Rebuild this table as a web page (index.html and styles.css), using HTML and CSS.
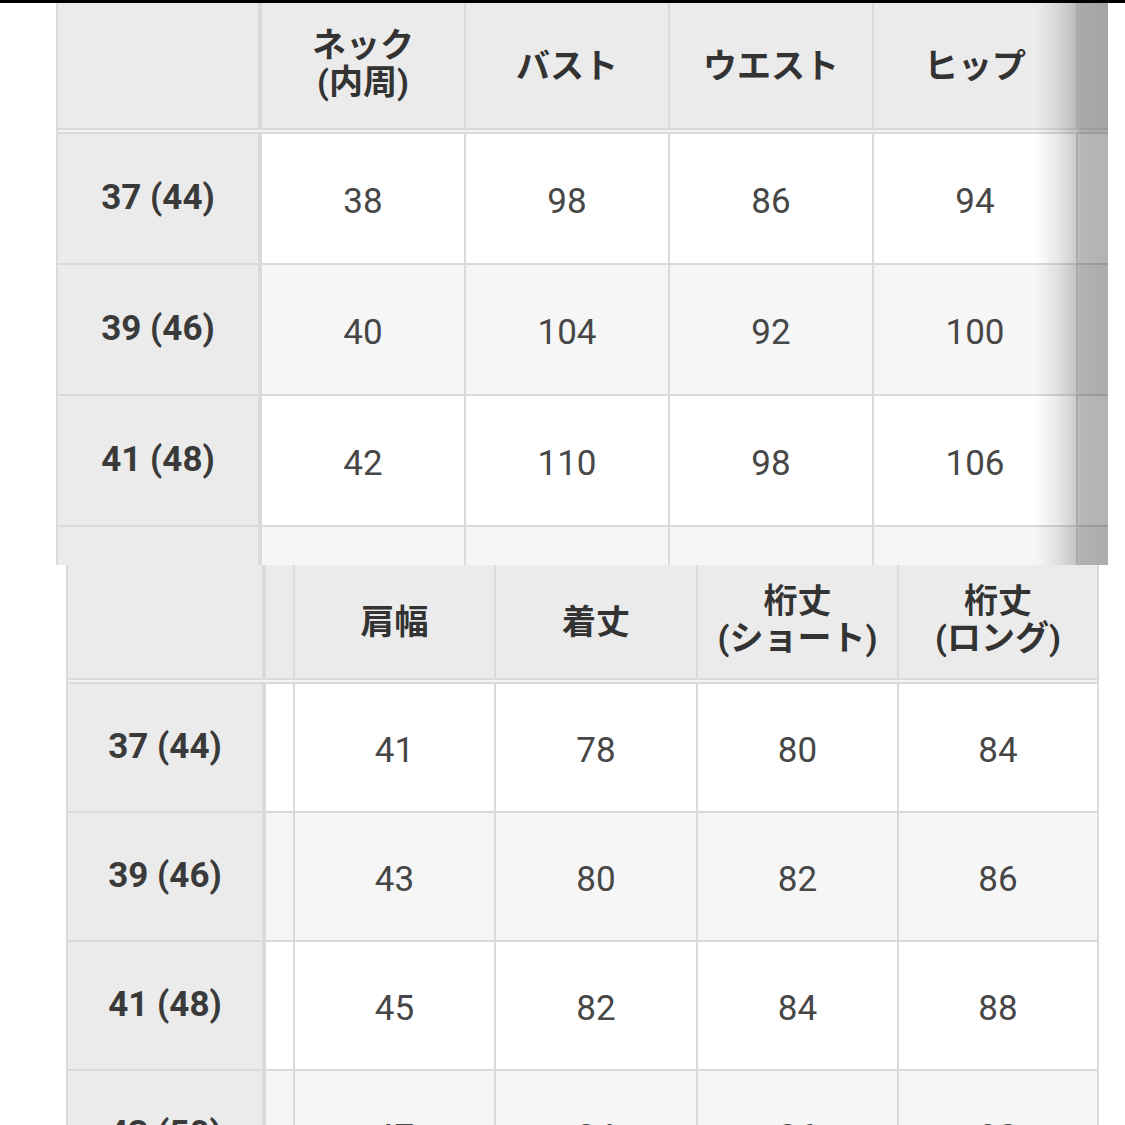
FILE: index.html
```html
<!DOCTYPE html>
<html lang="ja">
<head>
<meta charset="utf-8">
<title>サイズ表</title>
<link rel="stylesheet" href="styles.css">
</head>
<body>
<div class="topbar"></div>

<div class="shot shot1">
  <div class="grid grid1">
    <div class="cell head label"></div>
    <div class="cell head two">ネック<br>(内周)</div>
    <div class="cell head">バスト</div>
    <div class="cell head">ウエスト</div>
    <div class="cell head">ヒップ</div>
    <div class="cell head"></div>

    <div class="sep"></div>

    <div class="cell label">37 (44)</div>
    <div class="cell num">38</div>
    <div class="cell num">98</div>
    <div class="cell num">86</div>
    <div class="cell num">94</div>
    <div class="cell num"></div>

    <div class="cell label">39 (46)</div>
    <div class="cell num alt">40</div>
    <div class="cell num alt">104</div>
    <div class="cell num alt">92</div>
    <div class="cell num alt">100</div>
    <div class="cell num alt"></div>

    <div class="cell label">41 (48)</div>
    <div class="cell num">42</div>
    <div class="cell num">110</div>
    <div class="cell num">98</div>
    <div class="cell num">106</div>
    <div class="cell num"></div>

    <div class="cell label"></div>
    <div class="cell num alt"></div>
    <div class="cell num alt"></div>
    <div class="cell num alt"></div>
    <div class="cell num alt"></div>
    <div class="cell num alt"></div>
  </div>
  <div class="scroll-shade"></div>
</div>

<div class="shot shot2">
  <div class="grid grid2">
    <div class="cell head label"></div>
    <div class="cell head"></div>
    <div class="cell head">肩幅</div>
    <div class="cell head">着丈</div>
    <div class="cell head two">桁丈<br>(ショート)</div>
    <div class="cell head two">桁丈<br>(ロング)</div>

    <div class="sep"></div>

    <div class="cell label">37 (44)</div>
    <div class="cell num"></div>
    <div class="cell num">41</div>
    <div class="cell num">78</div>
    <div class="cell num">80</div>
    <div class="cell num">84</div>

    <div class="cell label">39 (46)</div>
    <div class="cell num alt"></div>
    <div class="cell num alt">43</div>
    <div class="cell num alt">80</div>
    <div class="cell num alt">82</div>
    <div class="cell num alt">86</div>

    <div class="cell label">41 (48)</div>
    <div class="cell num"></div>
    <div class="cell num">45</div>
    <div class="cell num">82</div>
    <div class="cell num">84</div>
    <div class="cell num">88</div>

    <div class="cell label">43 (50)</div>
    <div class="cell num alt"></div>
    <div class="cell num alt">47</div>
    <div class="cell num alt">84</div>
    <div class="cell num alt">86</div>
    <div class="cell num alt">90</div>
  </div>
</div>
</body>
</html>
```

FILE: styles.css
```css
html, body {
  margin: 0;
  padding: 0;
  background: #ffffff;
}

body {
  width: 1125px;
  height: 1125px;
  overflow: hidden;
  font-family: Roboto, "Noto Sans CJK JP", "Noto Sans", sans-serif;
  color: #444444;
}

.topbar {
  height: 3px;
  background: #000000;
}

.shot {
  position: relative;
  overflow: hidden;
}

.shot1 {
  margin-left: 56px;
  width: 1052px;
  height: 562px;
}

.shot2 {
  margin-left: 66px;
  width: 1033px;
  height: 560px;
}

.grid {
  display: grid;
  gap: 2px;
  background: #dadada;
  padding-left: 2px;
}

.grid1 {
  grid-template-columns: 202px 202px 202px 202px 202px 30px;
  grid-template-rows: 125px 2px 129px 129px 129px 129px;
}

.grid2 {
  grid-template-columns: 196px 27px 199px 200px 199px 198px;
  grid-template-rows: 113px 2px 127px 127px 127px 127px;
  padding-right: 2px;
}

.sep {
  grid-column: 1 / -1;
  background: #f3f3f3;
}

.cell {
  display: flex;
  align-items: center;
  justify-content: center;
  text-align: center;
  background: #ffffff;
}

.cell.alt {
  background: #f6f6f6;
}

.head {
  background: #ebebeb;
  color: #333333;
  font-weight: 700;
  font-size: 34px;
  line-height: 38px;
}

.head.two {
  line-height: 37px;
  padding-bottom: 4px;
}

.label {
  background: #ebebeb;
  margin-right: 2px;
  color: #3a3a3a;
  font-weight: 700;
  font-size: 35px;
  padding-bottom: 3px;
}

.num {
  font-size: 35px;
  font-weight: 400;
  color: #474747;
  padding-top: 5px;
}

.scroll-shade {
  position: absolute;
  top: 0;
  right: 0;
  bottom: 0;
  width: 72px;
  background: linear-gradient(to right,
    rgba(0, 0, 0, 0) 0px,
    rgba(0, 0, 0, 0.10) 24px,
    rgba(0, 0, 0, 0.20) 40px,
    rgba(0, 0, 0, 0.28) 44px,
    rgba(0, 0, 0, 0.30) 100%);
  pointer-events: none;
}
```
